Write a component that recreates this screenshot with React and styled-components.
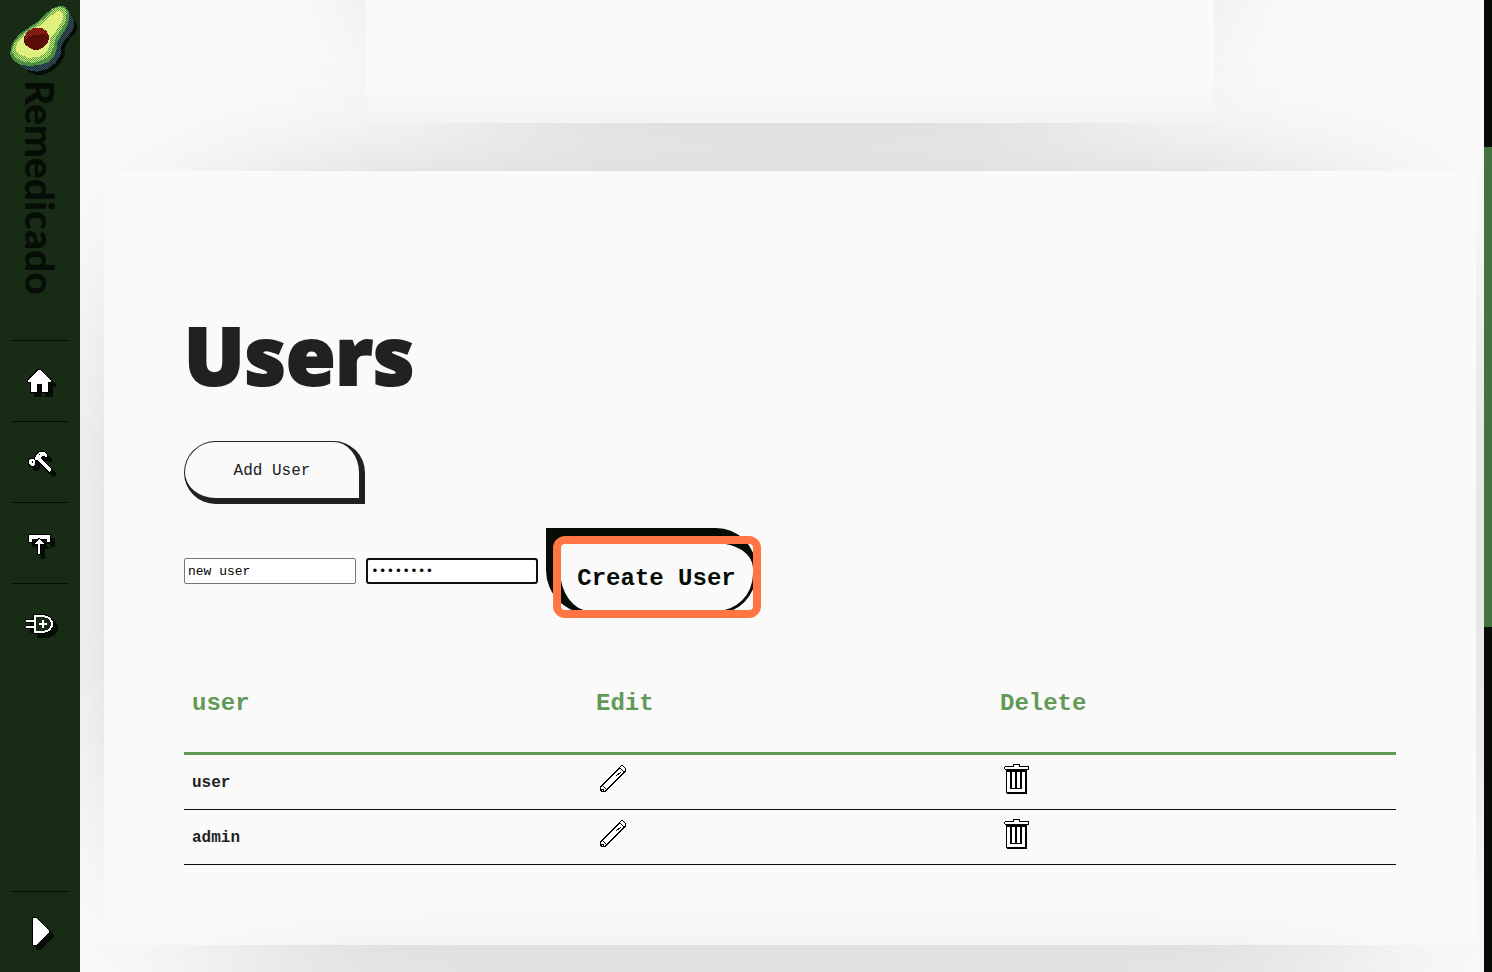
import React, { useState } from "react";
import styled, { createGlobalStyle, css } from "styled-components";

const color = {
  paper: "#fafafa",
  ink: "#212121",
  black: "#060d06",
  forest: "#182c15",
  leaf: "#619957",
  thumb: "#45733f",
  accent: "#ff7544",
};
const mono = `"Liberation Mono", monospace`;

const GlobalStyle = createGlobalStyle`
  *, *::before, *::after { box-sizing: border-box; }
  body { margin: 0; background: ${color.paper}; color: ${color.ink}; font: 16px ${mono}; }
`;

const Shell = styled.div`
  display: grid;
  grid-template-columns: 80px minmax(0, 1fr) 8px;
  height: 100vh;
  overflow: hidden;
`;

const Sidebar = styled.nav`
  display: flex;
  flex-direction: column;
  align-items: center;
  background: ${color.forest};
`;

const Brand = styled.a`
  display: flex;
  flex-direction: column;
  align-items: center;
  height: 340px;
  color: ${color.black};
  text-decoration: none;
`;

const BrandName = styled.span`
  writing-mode: vertical-rl;
  font: 900 39px/46px Lato, sans-serif;
`;

const NavItem = styled.a`
  display: flex;
  justify-content: center;
  align-items: center;
  width: 56px;
  height: 81px;
  border-top: 1px solid ${color.black};
  ${(p) => p.$last && css`margin-top: auto;`}
`;

const Icon = styled.svg`
  display: block;
  width: 32px;
  height: 32px;
  overflow: visible;
  shape-rendering: crispEdges;
  paint-order: stroke;
  ${(p) => p.$shadow && css`filter: drop-shadow(4px 4px 0 ${color.black});`}
`;

const Logo = styled.svg`
  display: block;
  width: 80px;
  height: 80px;
  shape-rendering: crispEdges;
`;

const Main = styled.main`
  display: flex;
  flex-direction: column;
  align-items: center;
  gap: 48px;
  padding: 0 8px 0 24px;
  overflow: hidden;
`;

const Card = styled.section`
  position: relative;
  isolation: isolate;
  flex: none;
  width: 100%;
  padding: 80px;
  &::before, &::after {
    content: "";
    position: absolute;
    z-index: -1;
  }
  &::before {
    inset: 130px;
    background: rgba(0, 0, 0, 0.88);
    filter: blur(100px);
  }
  &::after {
    inset: 0;
    background: ${color.paper};
  }
`;

const PreviousCard = styled(Card)`
  width: 62%;
  max-width: 848px;
  height: 600px;
  margin-top: -477px;
`;

const NextCard = styled(Card)`
  height: 600px;
`;

const Title = styled.h1`
  margin: 55px 0 39px;
  font: 800 80px/96px "Open Sans", sans-serif;
  -webkit-text-stroke: 2px ${color.ink};
`;

const AddButton = styled.button`
  display: block;
  min-width: 181px;
  height: 63px;
  padding: 2px 48px 0;
  border: solid ${color.ink};
  border-width: 1px 6px 6px 1px;
  border-radius: 32px 32px 0 32px;
  background: transparent;
  color: ${color.ink};
  font: 16px ${mono};
`;

const UserForm = styled.form`
  display: flex;
  align-items: center;
  gap: 8px;
  margin-top: 24px;
`;

const Fields = styled.div`
  display: flex;
  gap: 10px;
`;

const Field = styled.input`
  width: 172px;
  height: 26px;
  padding: 1px 3px;
  border: 1px solid #767676;
  border-radius: 2px;
  outline: none;
  background: #fff;
  color: #000;
  font: 13px ${mono};
  ${(p) => p.$active && css`
    border: 2px solid #101010;
    border-radius: 3px;
  `}
`;

const Spotlight = styled.div`
  position: relative;
  &::after {
    content: "";
    position: absolute;
    inset: 8px -5px -4px 7px;
    border: 8px solid ${color.accent};
    border-radius: 12px;
    pointer-events: none;
  }
`;

const CreateButton = styled.button`
  display: block;
  width: 210px;
  height: 86px;
  padding: 2px 0 0;
  border: solid ${color.black};
  border-width: 15px 3px 3px 14px;
  border-radius: 0 40px 40px 44px;
  background: ${color.paper};
  color: ${color.black};
  font: bold 24px ${mono};
`;

const UserTable = styled.table`
  width: 100%;
  margin-top: 64px;
  border-collapse: separate;
  border-spacing: 0;
  table-layout: fixed;
  text-align: left;
`;

const HeadCell = styled.th`
  padding: 10px 8px 32px;
  border-bottom: 3px solid ${color.leaf};
  color: ${color.leaf};
  font: bold 24px/32px ${mono};
`;

const Cell = styled.td`
  height: 55px;
  padding: 10px 8px 8px;
  border-bottom: 1px solid ${color.black};
  font-weight: bold;
`;

const ActionCell = styled(Cell)`
  padding: 8px 8px 14px;
`;

const IconButton = styled.button`
  display: block;
  padding: 0;
  border: 0;
  background: none;
`;

const ScrollTrack = styled.div`
  display: flex;
  flex-direction: column;
  padding-top: 147px;
  background: ${color.black};
`;

const ScrollThumb = styled.div`
  height: 480px;
  background: ${color.thumb};
`;

const Avocado = () => (
  <Logo viewBox="0 0 240 240" aria-hidden="true">
    <defs>
      <pattern id="dither" width="6" height="6" patternUnits="userSpaceOnUse">
        <path d="M0 0h3v3H0zM3 3h3v3H3z" fill="#5f9f4a" />
      </pattern>
      <pattern id="ditherSkin" width="6" height="6" patternUnits="userSpaceOnUse">
        <path d="M0 0h3v3H0zM3 3h3v3H3z" fill="#1d3038" />
      </pattern>
      <pattern id="ditherPit" width="6" height="6" patternUnits="userSpaceOnUse">
        <path d="M0 0h3v3H0zM3 3h3v3H3z" fill="#a8291b" />
      </pattern>
    </defs>
    <path d="M207 36L222 54L232 78L228 96L208 119L197 136L193 168L181 191L158 212L132 224H105L80 212L70 200Z" fill="#060d06" />
    <path d="M190 20L207 36L221 57L222 78L215 96L195 119L184 138L182 165L165 190L142 207L112 215L81 210L62 198Z" fill="#344e5b" />
    <path d="M190 20L207 36L221 57L222 78L215 96L195 119L184 138L182 165L165 190L142 207L112 215L81 210L62 198Z" fill="url(#ditherSkin)" />
    <path d="M180 18L195 20L206 34L208 53L202 78L184 107L172 126L169 151L160 172L143 187L119 195L87 198L61 194L40 181L31 163L32 143L42 122L58 102L85 84L111 66L134 44L158 25Z" fill="#4f8f42" />
    <path d="M178 20L193 24L200 38L198 64L180 94L166 117L160 143L150 165L131 179L103 188L74 187L48 174L36 157L39 137L55 114L79 94L111 74L138 49L158 28Z" fill="#c8ea76" />
    <path d="M178 20L193 24L200 38L198 64L180 94L166 117L160 143L150 165L131 179L103 188L74 187L48 174L36 157L39 137L55 114L79 94L111 74L138 49L158 28Z" fill="url(#dither)" />
    <path d="M178 31L190 41L188 60L170 90L151 115L148 141L136 160L112 172L82 173L57 162L47 148L53 126L74 103L101 87L126 73L151 48Z" fill="#dff07f" />
    <path d="M99 84H126L141 94L147 109L144 129L128 143L108 152L88 144L74 132L71 114L80 97Z" fill="#5b0d0a" />
    <path d="M99 84H126L141 94L144 106L132 103L111 104L89 109L74 121L73 108L80 97Z" fill="url(#ditherPit)" />
  </Logo>
);

const HomeIcon = () => (
  <Icon $shadow viewBox="0 0 32 32" aria-hidden="true">
    <path d="M14 5H16L27 16V17H24V27H18V19H13V27H7V17H4V15Z" fill="#fff" stroke="#000" strokeWidth="2" />
  </Icon>
);

const HammerIcon = () => (
  <Icon $shadow viewBox="0 0 32 32" aria-hidden="true">
    <path d="M11 12L13 8L16 6H20L23 9V11L18 10L16 12L27 23V25L25 26L13 14L10 14Z" fill="#fff" stroke="#000" strokeWidth="2" />
    <path d="M6 13H9L11 15V18L9 20H7L5 18V15Z" fill="#fff" stroke="#000" strokeWidth="2" />
    <path d="M8 15H9V17H8ZM15 8H16V9H15Z" fill="#000" />
  </Icon>
);

const UploadIcon = () => (
  <Icon $shadow viewBox="0 0 32 32" aria-hidden="true">
    <path d="M5 8H26V15H23V12H8V15H5Z" fill="#fff" stroke="#000" strokeWidth="2" />
    <path d="M15 12L20 17H16V27H14V17H10Z" fill="#fff" stroke="#000" strokeWidth="2" />
  </Icon>
);

const PlugIcon = () => (
  <Icon $shadow viewBox="0 0 32 32" aria-hidden="true">
    <path d="M11 8H20L25 10L28 14V18L25 22L20 24H11Z" fill={color.forest} stroke="#000" strokeWidth="4" />
    <path d="M2 13H10M2 19H10" stroke="#000" strokeWidth="4" />
    <path d="M11 8H20L25 10L28 14V18L25 22L20 24H11Z" fill={color.forest} />
    <path d="M11 8H20L25 10L28 14V18L25 22L20 24H11Z" fill="none" stroke="#fff" strokeWidth="2" />
    <path d="M2 13H10M2 19H10" stroke="#fff" strokeWidth="2" />
    <path d="M15 16H23M19 12V20" stroke="#fff" strokeWidth="2" />
  </Icon>
);

const ExpandIcon = () => (
  <Icon $shadow viewBox="0 0 32 32" aria-hidden="true">
    <path d="M9 2H12L25 15V16L12 29H9Z" fill="#fff" stroke="#000" strokeWidth="2" />
  </Icon>
);

const PencilIcon = () => (
  <Icon viewBox="0 0 32 32" aria-hidden="true">
    <path d="M25 2H27L30 6V9L12 26L9 29H5L4 28V23L23 4Z" fill="#000" />
    <path d="M25 3H26L29 6V8L10 26L8 28H6L5 27V24L24 5Z" fill="#fff" />
    <path d="M6 22L10 26M5 26H7V28M23 4L28 9M22 7L17 12M25 9L20 13" fill="none" stroke="#000" />
  </Icon>
);

const TrashIcon = () => (
  <Icon viewBox="0 0 32 32" aria-hidden="true">
    <path d="M6 6H27V30L26 31H7L6 30Z" fill="#000" />
    <path d="M7 9H26V29H7Z" fill="#fff" />
    <path d="M25 9H26V29H25ZM10 9H12V26H10ZM15 9H17V26H15ZM20 9H22V26H20ZM10 25H22V26H10Z" fill="#000" />
    <path d="M5 3H13V1H20V3H28L29 4V6L28 7H5L4 6V4Z" fill="#000" />
    <path d="M5 4H14V2H19V4H28V6H5Z" fill="#fff" />
  </Icon>
);

const links = [
  { label: "Home", Glyph: HomeIcon },
  { label: "Build", Glyph: HammerIcon },
  { label: "Upload", Glyph: UploadIcon },
  { label: "Connect", Glyph: PlugIcon },
];

const users = ["user", "admin"];

export default function App() {
  const [name, setName] = useState("new user");
  const [password, setPassword] = useState("password");

  return (
    <>
      <GlobalStyle />
      <Shell>
        <Sidebar>
          <Brand href="#">
            <Avocado />
            <BrandName>Remedicado</BrandName>
          </Brand>
          {links.map(({ label, Glyph }) => (
            <NavItem key={label} href="#" aria-label={label}>
              <Glyph />
            </NavItem>
          ))}
          <NavItem $last href="#" aria-label="Expand">
            <ExpandIcon />
          </NavItem>
        </Sidebar>
        <Main>
          <PreviousCard />
          <Card>
            <Title>Users</Title>
            <AddButton type="button">Add User</AddButton>
            <UserForm onSubmit={(e) => e.preventDefault()}>
              <Fields>
                <Field aria-label="User name" value={name} onChange={(e) => setName(e.target.value)} />
                <Field
                  $active
                  type="password"
                  aria-label="Password"
                  value={password}
                  onChange={(e) => setPassword(e.target.value)}
                />
              </Fields>
              <Spotlight>
                <CreateButton type="submit">Create User</CreateButton>
              </Spotlight>
            </UserForm>
            <UserTable>
              <thead>
                <tr>
                  <HeadCell>user</HeadCell>
                  <HeadCell>Edit</HeadCell>
                  <HeadCell>Delete</HeadCell>
                </tr>
              </thead>
              <tbody>
                {users.map((user) => (
                  <tr key={user}>
                    <Cell>{user}</Cell>
                    <ActionCell>
                      <IconButton type="button" aria-label={`Edit ${user}`}>
                        <PencilIcon />
                      </IconButton>
                    </ActionCell>
                    <ActionCell>
                      <IconButton type="button" aria-label={`Delete ${user}`}>
                        <TrashIcon />
                      </IconButton>
                    </ActionCell>
                  </tr>
                ))}
              </tbody>
            </UserTable>
          </Card>
          <NextCard />
        </Main>
        <ScrollTrack>
          <ScrollThumb />
        </ScrollTrack>
      </Shell>
    </>
  );
}
